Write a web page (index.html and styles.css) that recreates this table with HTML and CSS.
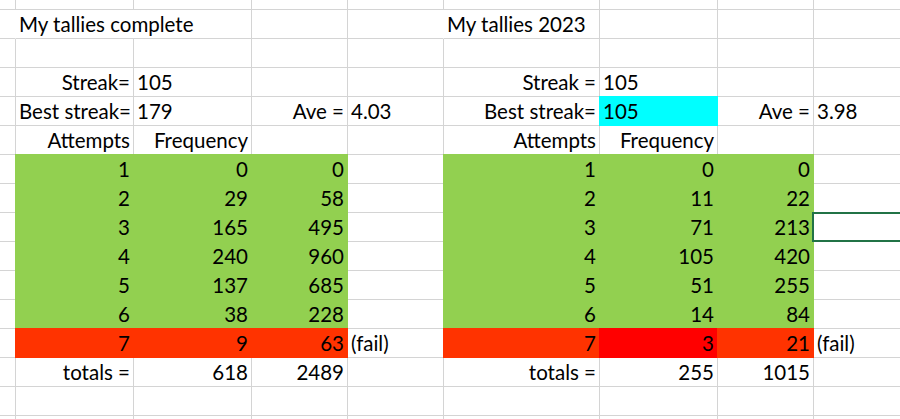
FILE: index.html
```html
<!DOCTYPE html>
<html lang="en">
<head>
<meta charset="utf-8">
<title>My tallies</title>
<link rel="stylesheet" href="styles.css">
</head>
<body>
<div class="sheet">
  <!-- row 0 -->
  <div class="c"></div><div class="c"></div><div class="c"></div><div class="c"></div><div class="c"></div><div class="c"></div><div class="c"></div><div class="c"></div><div class="c"></div>
  <!-- row 1 titles -->
  <div class="c nb"></div><div class="c span2">My tallies complete</div><div class="c"></div><div class="c nb"></div><div class="c">My tallies 2023</div><div class="c"></div><div class="c"></div><div class="c"></div>
  <!-- row 2 -->
  <div class="c"></div><div class="c"></div><div class="c"></div><div class="c"></div><div class="c"></div><div class="c"></div><div class="c"></div><div class="c"></div><div class="c"></div>
  <!-- row 3 -->
  <div class="c"></div><div class="c r">Streak=</div><div class="c">105</div><div class="c"></div><div class="c"></div><div class="c r">Streak =</div><div class="c">105</div><div class="c"></div><div class="c"></div>
  <!-- row 4 -->
  <div class="c"></div><div class="c r">Best streak=</div><div class="c">179</div><div class="c r">Ave =</div><div class="c">4.03</div><div class="c r">Best streak=</div><div class="c cy">105</div><div class="c r">Ave =</div><div class="c">3.98</div>
  <!-- row 5 -->
  <div class="c"></div><div class="c r">Attempts</div><div class="c r">Frequency</div><div class="c"></div><div class="c"></div><div class="c r">Attempts</div><div class="c r">Frequency</div><div class="c"></div><div class="c"></div>
  <!-- row 6 -->
  <div class="c"></div><div class="c r g">1</div><div class="c r g">0</div><div class="c r g">0</div><div class="c"></div><div class="c r g">1</div><div class="c r g">0</div><div class="c r g">0</div><div class="c"></div>
  <!-- row 7 -->
  <div class="c"></div><div class="c r g">2</div><div class="c r g">29</div><div class="c r g">58</div><div class="c"></div><div class="c r g">2</div><div class="c r g">11</div><div class="c r g">22</div><div class="c"></div>
  <!-- row 8 -->
  <div class="c"></div><div class="c r g">3</div><div class="c r g">165</div><div class="c r g">495</div><div class="c"></div><div class="c r g">3</div><div class="c r g">71</div><div class="c r g">213</div><div class="c sel"></div>
  <!-- row 9 -->
  <div class="c"></div><div class="c r g">4</div><div class="c r g">240</div><div class="c r g">960</div><div class="c"></div><div class="c r g">4</div><div class="c r g">105</div><div class="c r g">420</div><div class="c"></div>
  <!-- row 10 -->
  <div class="c"></div><div class="c r g">5</div><div class="c r g">137</div><div class="c r g">685</div><div class="c"></div><div class="c r g">5</div><div class="c r g">51</div><div class="c r g">255</div><div class="c"></div>
  <!-- row 11 -->
  <div class="c"></div><div class="c r g">6</div><div class="c r g">38</div><div class="c r g">228</div><div class="c"></div><div class="c r g">6</div><div class="c r g">14</div><div class="c r g">84</div><div class="c"></div>
  <!-- row 12 -->
  <div class="c"></div><div class="c r o">7</div><div class="c r o">9</div><div class="c r o">63</div><div class="c">(fail)</div><div class="c r o">7</div><div class="c r rd">3</div><div class="c r o">21</div><div class="c">(fail)</div>
  <!-- row 13 -->
  <div class="c"></div><div class="c r">totals =</div><div class="c r">618</div><div class="c r">2489</div><div class="c"></div><div class="c r">totals =</div><div class="c r">255</div><div class="c r">1015</div><div class="c"></div>
  <!-- row 14 -->
  <div class="c"></div><div class="c"></div><div class="c"></div><div class="c"></div><div class="c"></div><div class="c"></div><div class="c"></div><div class="c"></div><div class="c"></div>
  <!-- row 15 -->
  <div class="c"></div><div class="c"></div><div class="c"></div><div class="c"></div><div class="c"></div><div class="c"></div><div class="c"></div><div class="c"></div><div class="c"></div>
</div>
</body>
</html>
```
FILE: styles.css
```css
* { box-sizing: border-box; }
html, body {
  margin: 0;
  padding: 0;
  background: #fff;
  overflow: hidden;
}
.sheet {
  display: grid;
  grid-template-columns: 16px 118px 118px 96px 96px 156px 118px 96px 120px;
  grid-template-rows: 10px repeat(14, 29px) 4px;
  width: 934px;
  font-family: Lato, "Open Sans", sans-serif;
  font-size: 20.5px;
  line-height: 29px;
  color: #000;
}
.c {
  border-right: 1px solid #d4d4d4;
  border-bottom: 1px solid #d4d4d4;
  padding: 0 3px;
  white-space: nowrap;
  min-width: 0;
}
.r { text-align: right; }
.nb { border-right-color: transparent; }
.span2 { grid-column: span 2; }
.g {
  background: #92d050;
  border-color: #92d050;
  box-shadow: -1px 0 0 #92d050, 0 -1px 0 #92d050, -1px -1px 0 #92d050;
}
.o {
  background: #ff3300;
  border-color: #ff3300;
  box-shadow: -1px 0 0 #ff3300, 0 -1px 0 #ff3300, -1px -1px 0 #ff3300;
}
.rd {
  background: #ff0000;
  border-color: #ff0000;
  box-shadow: -1px 0 0 #ff0000, 0 -1px 0 #ff0000, -1px -1px 0 #ff0000;
}
.cy {
  background: #00ffff;
  border-color: #00ffff;
  box-shadow: -1px 0 0 #00ffff, 0 -1px 0 #00ffff, -1px -1px 0 #00ffff;
}
.sel { position: relative; }
.sel::after {
  content: "";
  position: absolute;
  top: -1px;
  left: -2px;
  right: -10px;
  bottom: -1px;
  border: 2px solid #217346;
}
```
